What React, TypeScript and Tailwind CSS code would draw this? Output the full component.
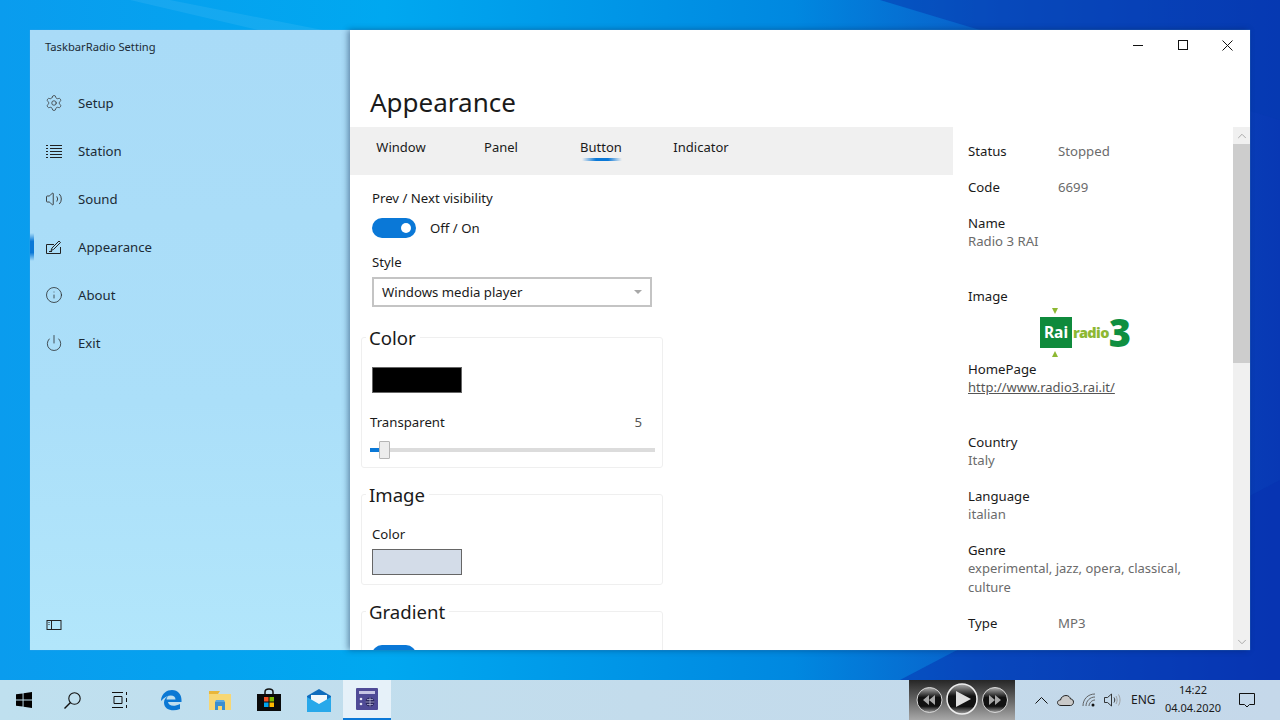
import { ChevronDown, ChevronUp, Info, Power, Settings, Volume2 } from "lucide-react";
import type { ReactNode } from "react";

const font = "font-['Noto_Sans','Open_Sans',sans-serif]";

function StationIcon() {
  return (
    <svg width="16" height="14" viewBox="0 0 16 14" fill="none" stroke="#222" strokeWidth="1">
      <path d="M0 1.500h2M4 1.500h12M0 4.500h2M4 4.500h12M0 7.500h2M4 7.500h12M0 10.500h2M4 10.500h12M0 13.500h2M4 13.500h12" />
    </svg>
  );
}

function AppearanceIcon() {
  return (
    <svg width="16" height="14" viewBox="0 0 16 14" fill="none" stroke="#222" strokeWidth="1">
      <path d="M8 4.500H.5v9h14V7" />
      <path d="M5 10.500l1-2.500L13 1l1.500 1.500L7.500 9.500z" />
      <path d="M3 11.500h3" />
    </svg>
  );
}

function PaneIcon() {
  return (
    <svg width="16" height="12" viewBox="0 0 16 12" fill="none" stroke="#222" strokeWidth="1">
      <rect x="1" y="1.500" width="14" height="9" />
      <path d="M5.500 1.500v9M2.500 3.500h1M2.500 5.500h1" />
    </svg>
  );
}

const navItems = [
  { label: "Setup", icon: <Settings size={18} strokeWidth={1} color="#333" /> },
  { label: "Station", icon: <StationIcon /> },
  { label: "Sound", icon: <Volume2 size={18} strokeWidth={1.200} color="#333" /> },
  { label: "Appearance", icon: <AppearanceIcon />, active: true },
  { label: "About", icon: <Info size={18} strokeWidth={1} color="#222" /> },
  { label: "Exit", icon: <Power size={18} strokeWidth={1} color="#222" /> },
];

function Sidebar() {
  return (
    <aside className="flex h-full w-[320px] shrink-0 flex-col bg-[linear-gradient(180deg,#a9dbf7_0%,#abdff9_60%,#b2e6fb_100%)]">
      <div className="pl-[15px] pt-[9px] text-[11.200px] leading-[16px] text-[#1c2b36]">TaskbarRadio Setting</div>
      <nav className="mt-[24px] flex flex-col">
        {navItems.map((item) => (
          <div key={item.label} className="relative flex h-[48px] items-center">
            {item.active && (
              <div className="absolute left-0 top-[10px] h-[28px] w-[4px] bg-[linear-gradient(180deg,transparent,#0a78d7_30%,#0a78d7_70%,transparent)]" />
            )}
            <div className="flex w-[48px] justify-center">{item.icon}</div>
            <span className="pt-[2px] text-[13.200px] text-[#1c2b36]">{item.label}</span>
          </div>
        ))}
      </nav>
      <div className="mt-auto flex h-[50px] w-[48px] items-center justify-center">
        <PaneIcon />
      </div>
    </aside>
  );
}

function CaptionButtons() {
  return (
    <div className="flex h-[30px] justify-end">
      <div className="flex w-[45px] items-center justify-center">
        <div className="h-px w-[10px] bg-[#111]" />
      </div>
      <div className="flex w-[45px] items-center justify-center">
        <div className="h-[10px] w-[10px] border border-[#111]" />
      </div>
      <div className="flex w-[45px] items-center justify-center">
        <svg width="11" height="11" viewBox="0 0 11 11" stroke="#111" strokeWidth="1">
          <path d="M.5.500l10 10M10.500.500l-10 10" />
        </svg>
      </div>
    </div>
  );
}

function Toggle() {
  return (
    <div className="flex h-[20px] w-[44px] items-center justify-end rounded-full bg-[#0a78d7] pr-[5px]">
      <div className="h-[10px] w-[10px] rounded-full bg-white" />
    </div>
  );
}

function Group({ title, children, height }: { title: string; children: ReactNode; height: string }) {
  return (
    <fieldset className={`ml-[11px] w-[302px] rounded-[3px] border border-[#efefef] ${height}`}>
      <legend className="ml-[4px] pl-[3px] pr-[4px] pt-[2px] text-[18.600px] leading-[26px] text-[#1a1a1a]">{title}</legend>
      {children}
    </fieldset>
  );
}

function Tabs() {
  const tabs = ["Window", "Panel", "Button", "Indicator"];
  return (
    <div className="flex h-[48px] shrink-0 bg-[#f0f0f0] pl-px">
      {tabs.map((tab) => (
        <div key={tab} className="relative flex h-full w-[100px] justify-center pt-[11px] text-[13px] leading-[18px] text-[#1a1a1a]">
          {tab}
          {tab === "Button" && (
            <div className="absolute left-[31px] top-[31px] h-[3px] w-[40px] bg-[linear-gradient(90deg,transparent,#0a78d7_35%,#0a78d7_65%,transparent)]" />
          )}
        </div>
      ))}
    </div>
  );
}

function SettingsColumn() {
  return (
    <div className="flex h-full w-[603px] shrink-0 flex-col overflow-hidden">
      <Tabs />
      <div className="flex flex-col pt-[14px] text-[13.200px] text-[#1a1a1a]">
        <div className="pl-[22px] leading-[18px]">Prev / Next visibility</div>
        <div className="mt-[11px] flex h-[20px] items-center gap-[14px] pl-[22px]">
          <Toggle />
          <span className="pt-[2px]">Off / On</span>
        </div>
        <div className="mt-[15px] pl-[22px] leading-[18px]">Style</div>
        <div className="ml-[22px] mt-[6px] flex h-[30px] w-[280px] items-center justify-between border-2 border-[#c4c4c4] px-[8px]">
          <span className="pt-[2px]">Windows media player</span>
          <div className="h-0 w-0 border-x-[4px] border-t-[4px] border-x-transparent border-t-[#a8a8a8]" />
        </div>
        <div className="mt-[16px]">
          <Group title="Color" height="h-[145px]">
            <div className="ml-[10px] mt-[16px] h-[26px] w-[90px] border border-[#666] bg-black" />
            <div className="ml-[8px] mr-[20px] mt-[20px] flex justify-between leading-[18px]">
              <span>Transparent</span>
              <span className="text-[#555]">5</span>
            </div>
            <div className="relative ml-[8px] mt-[10px] h-[18px] w-[285px]">
              <div className="absolute left-0 top-[7px] h-[4px] w-full bg-[#dcdcdc]" />
              <div className="absolute left-0 top-[7px] h-[4px] w-[10px] bg-[#0a78d7]" />
              <div className="absolute left-[9px] top-0 h-[18px] w-[11px] rounded-[1px] border border-[#b4b4b4] bg-[#ececec]" />
            </div>
          </Group>
        </div>
        <div className="mt-[12px]">
          <Group title="Image" height="h-[105px]">
            <div className="ml-[10px] mt-[17px] leading-[18px]">Color</div>
            <div className="ml-[10px] mt-[6px] h-[26px] w-[90px] border border-[#666] bg-[#d3dce8]" />
          </Group>
        </div>
        <div className="mt-[12px]">
          <Group title="Gradient" height="h-[105px]">
            <div className="ml-[10px] mt-[20px]">
              <Toggle />
            </div>
          </Group>
        </div>
      </div>
    </div>
  );
}

function RaiLogo() {
  return (
    <div className="ml-[72px] mt-[3px] flex w-[94px] flex-col">
      <div className="ml-[12px] h-0 w-0 border-x-[3px] border-t-[6px] border-x-transparent border-t-[#8db832]" />
      <div className="mt-[3px] flex h-[31px] items-center">
        <div className="flex h-[31px] w-[32px] shrink-0 items-center justify-center bg-[#0f8a3c] text-[15.500px] font-bold leading-none text-white">Rai</div>
        <span className="ml-[1px] text-[14.500px] font-black leading-none tracking-[-0.6px] text-[#8db832]">radio</span>
        <span className="text-[38px] font-black leading-[31px] text-[#0f8f40]">3</span>
      </div>
      <div className="ml-[12px] mt-[3px] h-0 w-0 border-x-[3px] border-b-[6px] border-x-transparent border-b-[#8db832]" />
    </div>
  );
}

function Row({ label, value }: { label: string; value: string }) {
  return (
    <div className="flex h-[18px] items-center leading-[18px]">
      <span className="w-[90px] text-[#1a1a1a]">{label}</span>
      <span className="text-[#6b6b6b]">{value}</span>
    </div>
  );
}

function Stacked({ label, children }: { label: string; children: ReactNode }) {
  return (
    <div className="leading-[18px]">
      <div className="text-[#1a1a1a]">{label}</div>
      <div className="text-[#6b6b6b]">{children}</div>
    </div>
  );
}

function InfoPanel() {
  return (
    <div className="flex h-full min-w-0 flex-1">
      <div className="min-w-0 flex-1 overflow-hidden pl-[15px] pt-[15px] text-[13.200px]">
        <Row label="Status" value="Stopped" />
        <div className="mt-[18px]"><Row label="Code" value="6699" /></div>
        <div className="mt-[18px]"><Stacked label="Name">Radio 3 RAI</Stacked></div>
        <div className="mt-[37px] leading-[18px] text-[#1a1a1a]">Image</div>
        <RaiLogo />
        <div className="mt-[3px]">
          <Stacked label="HomePage"><span className="text-[13px] text-[#555] underline">http://www.radio3.rai.it/</span></Stacked>
        </div>
        <div className="mt-[37px]"><Stacked label="Country">Italy</Stacked></div>
        <div className="mt-[18px]"><Stacked label="Language">italian</Stacked></div>
        <div className="mt-[18px]">
          <Stacked label="Genre">
            <div className="w-[225px] text-[13px] leading-[19px]">experimental, jazz, opera, classical, culture</div>
          </Stacked>
        </div>
        <div className="mt-[17px]"><Row label="Type" value="MP3" /></div>
      </div>
      <div className="flex h-full w-[17px] shrink-0 flex-col bg-[#f0f0f0]">
        <div className="flex h-[17px] items-center justify-center">
          <ChevronUp size={14} color="#a0a0a0" strokeWidth={1.500} />
        </div>
        <div className="h-[219px] bg-[#cdcdcd]" />
        <div className="mt-auto flex h-[17px] items-center justify-center">
          <ChevronDown size={14} color="#a0a0a0" strokeWidth={1.500} />
        </div>
      </div>
    </div>
  );
}

function Win() {
  return (
    <div className="relative flex h-[620px] w-[1220px] bg-white shadow-[0_0_1px_#5aa8e0]">
      <Sidebar />
      <main className="flex h-full min-w-0 flex-1 flex-col bg-white shadow-[-2px_0_6px_rgba(0,30,70,0.45)]">
        <CaptionButtons />
        <h1 className="flex h-[67px] items-start pl-[20px] pt-[27px] text-[26px] font-normal leading-[30px] text-[#1a1a1a]">Appearance</h1>
        <div className="flex min-h-0 flex-1">
          <SettingsColumn />
          <InfoPanel />
        </div>
      </main>
    </div>
  );
}

function WinLogo() {
  return (
    <svg width="16" height="16" viewBox="0 0 17 17" fill="#000">
      <path d="M0 2.500l7-1v6.500H0zM8 1.300L17 0v8H8zM0 9h7v6.500l-7-1zM8 9h9v8l-9-1.300z" />
    </svg>
  );
}

function SearchIcon() {
  return (
    <svg width="17" height="17" viewBox="0 0 17 17" fill="none" stroke="#111" strokeWidth="1.100">
      <circle cx="10.500" cy="6.500" r="5.700" />
      <path d="M6.500 10.500L.5 16.500" strokeWidth="1.400" />
    </svg>
  );
}

function TaskViewIcon() {
  return (
    <svg width="17" height="16" viewBox="0 0 17 16" fill="none" stroke="#111" strokeWidth="1">
      <path d="M0 .500h11M0 15.500h11M2 4.500h8v7H2zM14.500 0v3M14.500 6v4M14.500 13v3" />
    </svg>
  );
}

function EdgeIcon() {
  return (
    <svg width="22" height="22" viewBox="0 0 22 22">
      <path d="M1 11C2 4 7 1 12 1c6 0 9.500 4.500 9.500 10v2H8c.5 4 6 5 12 2v5c-7 3-16 1-16-6.500 0-3 2-5.500 5-7-2 1.500-2.500 3-2.500 4h9c0-5-8-6-14.500 1.500z" fill="#0b78d4" />
    </svg>
  );
}

function FolderIcon() {
  return (
    <svg width="22" height="19" viewBox="0 0 22 19">
      <path d="M0 3h22v16H0z" fill="#f7d774" />
      <path d="M0 3h9l2-3H0z" fill="#e8b63a" />
      <path d="M6 11h10v8h-3v-4H9v4H6z" fill="#3b8fd0" />
      <path d="M7 9h8l1 2H6z" fill="#5aa9e0" />
    </svg>
  );
}

function StoreIcon() {
  return (
    <svg width="24" height="24" viewBox="0 0 24 24">
      <path d="M8 7V4c0-4 8-4 8 0v3" fill="none" stroke="#111" strokeWidth="1.500" />
      <path d="M0 6h24v17H0z" fill="#0a0a0a" />
      <path d="M7 9h4.500v4.500H7z" fill="#f25022" />
      <path d="M12.500 9H17v4.500h-4.500z" fill="#7fba00" />
      <path d="M7 14.500h4.500V19H7z" fill="#00a4ef" />
      <path d="M12.500 14.500H17V19h-4.500z" fill="#ffb900" />
    </svg>
  );
}

function MailIcon() {
  return (
    <svg width="24" height="23" viewBox="0 0 24 23">
      <path d="M12 0l12 7v16H0V7z" fill="#0f6cbd" />
      <path d="M4 6h16v6l-8 4-8-4z" fill="#f2f7fb" />
      <path d="M0 8l12 7 12-7v15H0z" fill="#28a8ea" />
    </svg>
  );
}

function RadioIcon() {
  return (
    <svg width="22" height="22" viewBox="0 0 22 22">
      <rect width="22" height="22" rx="1" fill="#4f4a96" />
      <rect x="3" y="3" width="16" height="3" fill="#c7c5e4" />
      <circle cx="5" cy="11" r="1.300" fill="#e3e2f3" />
      <circle cx="5" cy="16" r="1.300" fill="#e3e2f3" />
      <circle cx="14" cy="14" r="4.500" fill="#2b2860" />
      <path d="M9.500 14h9M14 9.500v9M11 11.500h6M11 16.500h6" stroke="#c7c5e4" strokeWidth=".7" />
    </svg>
  );
}

function TaskIcon({ x, children }: { x: string; children: ReactNode }) {
  return <div className={`flex h-full items-center justify-center ${x}`}>{children}</div>;
}

function MetalPlayer() {
  return (
    <svg width="106" height="40" viewBox="0 0 106 40" className="shrink-0">
      <defs>
        <linearGradient id="plate" x1="0" y1="0" x2="0" y2="1">
          <stop offset="0" stopColor="#262626" />
          <stop offset=".55" stopColor="#6b6b6b" />
          <stop offset="1" stopColor="#a8a8a8" />
        </linearGradient>
        <linearGradient id="ball" x1="0" y1="0" x2="0" y2="1">
          <stop offset="0" stopColor="#b0b0b0" />
          <stop offset=".4" stopColor="#111" />
          <stop offset=".75" stopColor="#111" />
          <stop offset="1" stopColor="#a0a0a0" />
        </linearGradient>
      </defs>
      <rect width="106" height="40" fill="url(#plate)" />
      <circle cx="20.500" cy="20" r="12.500" fill="url(#ball)" stroke="#d8d8d8" strokeWidth="1" />
      <path d="M20 15v10l-6-5zM26 15v10l-6-5z" fill="#a8a8a8" />
      <circle cx="53" cy="19" r="15" fill="url(#ball)" stroke="#eee" strokeWidth="1.500" />
      <path d="M47 11l15 8-15 8z" fill="#dedede" />
      <circle cx="86" cy="20" r="12.500" fill="url(#ball)" stroke="#d8d8d8" strokeWidth="1" />
      <path d="M80 15v10l6-5zM86 15v10l6-5z" fill="#a8a8a8" />
    </svg>
  );
}

function Tray() {
  return (
    <div className="flex h-full flex-1 items-center text-[#1a1a1a]">
      <div className="ml-[19px] flex w-[14px] justify-center">
        <svg width="13" height="7" viewBox="0 0 13 7" fill="none" stroke="#111"><path d="M.5 6.500l6-6 6 6" /></svg>
      </div>
      <div className="ml-[9px]">
        <svg width="17" height="11" viewBox="0 0 17 11" fill="#c9c9c9" stroke="#222"><path d="M4 10.500C1.500 10.500.5 9 .5 7.500S2 5 3.500 5C4 2 6.500.5 9 .5c2.500 0 4 1.500 4.500 3.500 2 0 3 1.500 3 3.200s-1.500 3.300-3 3.300z" /></svg>
      </div>
      <div className="ml-[8px]">
        <svg width="14" height="14" viewBox="0 0 14 14" fill="none" stroke="#555" strokeWidth=".9">
          <path d="M1 13C1 6 6 1 13 1M4 13c0-5 4-9 9-9M7 13c0-3 3-6 6-6" />
          <circle cx="11" cy="12" r="1.500" fill="#111" stroke="none" />
        </svg>
      </div>
      <div className="ml-[8px]">
        <svg width="17" height="14" viewBox="0 0 17 14" fill="none" stroke="#222" strokeWidth=".9">
          <path d="M.5 4.500h3L7.500 1v12l-4-3.500h-3z" />
          <path d="M10 4.500c1 1.500 1 3.500 0 5" />
          <path d="M12 3c1.500 2.500 1.500 5.500 0 8M14.500 1.500c2 3.500 2 7.500 0 11" stroke="#999" />
        </svg>
      </div>
      <span className="ml-[10px] w-[24px] text-[12px] leading-none">ENG</span>
      <div className="ml-[5px] flex w-[66px] flex-col items-center pb-[2px] text-[11px] leading-[18px]">
        <span>14:22</span>
        <span>04.04.2020</span>
      </div>
      <div className="ml-[13px]">
        <svg width="16" height="15" viewBox="0 0 16 15" fill="none" stroke="#111">
          <path d="M.5.500h15v11h-5l-2.500 2.500-2.500-2.500h-5z" />
        </svg>
      </div>
    </div>
  );
}

function Taskbar() {
  return (
    <footer className="flex h-[40px] w-[1280px] shrink-0 items-center bg-[linear-gradient(90deg,#bfe0ef_0%,#c3dcec_50%,#c5d8ea_100%)]">
      <TaskIcon x="w-[48px]"><WinLogo /></TaskIcon>
      <TaskIcon x="w-[48px]"><SearchIcon /></TaskIcon>
      <TaskIcon x="w-[48px]"><TaskViewIcon /></TaskIcon>
      <TaskIcon x="w-[54px]"><EdgeIcon /></TaskIcon>
      <TaskIcon x="w-[44px]"><FolderIcon /></TaskIcon>
      <TaskIcon x="w-[53px]"><StoreIcon /></TaskIcon>
      <TaskIcon x="w-[48px]"><MailIcon /></TaskIcon>
      <div className="flex h-full w-[48px] items-center justify-center border-b-2 border-[#0a78d7] bg-[#e6f1f9]">
        <RadioIcon />
      </div>
      <div className="w-[518px]" />
      <MetalPlayer />
      <Tray />
    </footer>
  );
}

export default function App() {
  return (
    <div className={`relative flex h-[720px] w-[1280px] flex-col overflow-hidden ${font}`}>
      <div className="relative h-[680px] w-full bg-[linear-gradient(90deg,#0a9cee_0%,#00a8f0_30%,#0088e0_62%,#0a5cc8_78%,#0838b4_100%)] p-[30px]">
        <svg className="absolute inset-0" width="1280" height="680" viewBox="0 0 1280 680">
          <path d="M130 0h40l560 110v30z" fill="#ffffff" opacity=".07" />
          <path d="M1280 0v120l-400-120z" fill="#063ab0" opacity=".55" />
          <path d="M900 680l380-200v200z" fill="#0630b0" opacity=".5" />
        </svg>
        <Win />
      </div>
      <Taskbar />
    </div>
  );
}
